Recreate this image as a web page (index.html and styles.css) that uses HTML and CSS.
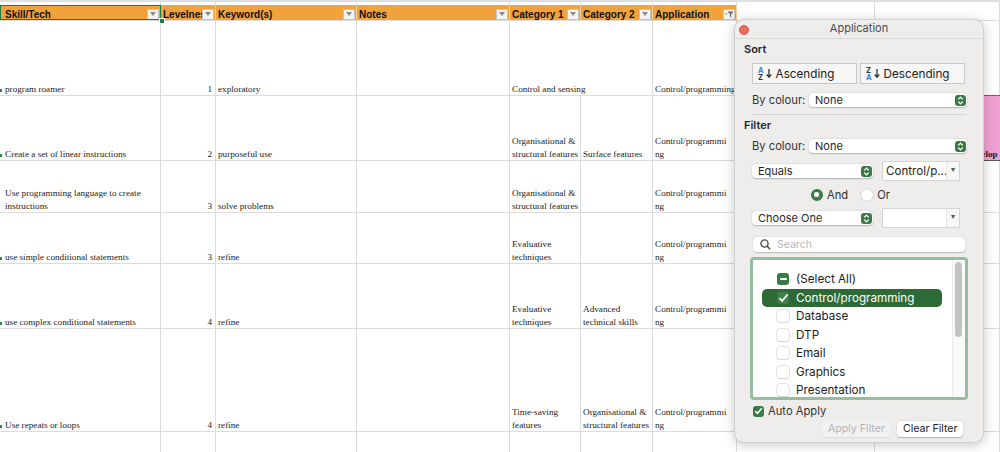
FILE: index.html
```html
<!DOCTYPE html>
<html>
<head>
    <link rel="stylesheet" href="styles.css">
</head>
<body>
    <div class="sheet">
        <div class="row top">
            <div></div><div></div><div></div><div></div><div></div><div></div><div></div><div></div><div></div>
        </div>
        <div class="row head">
            <div class="hc first"><span>Skill/Tech</span><b class="dd"></b></div>
            <div class="hc"><span>Levelness</span><b class="dd"></b></div>
            <div class="hc"><span>Keyword(s)</span><b class="dd"></b></div>
            <div class="hc"><span>Notes</span><b class="dd"></b></div>
            <div class="hc"><span>Category 1</span><b class="dd"></b></div>
            <div class="hc"><span>Category 2</span><b class="dd"></b></div>
            <div class="hc"><span>Application</span><b class="dd on">
                <svg width="10" height="9" viewBox="0 0 10 9"><path d="M1 3.5h2.4L2.2 5z" fill="#777"/><path d="M3.6 1.5h6l-2.4 2.8v3.2l-1.2-.8V4.3z" fill="#666"/></svg>
            </b></div>
            <div class="hc blank"></div>
            <div class="hc blank"></div>
        </div>
        <div class="row h75">
            <div class="c first mark">program roamer</div>
            <div class="c num">1</div>
            <div class="c">exploratory</div>
            <div class="c"></div>
            <div class="c span2">Control and sensing</div>
            <div class="c">Control/programming</div>
            <div class="c"></div>
            <div class="c"></div>
        </div>
        <div class="row h65">
            <div class="c first mark">Create a set of linear instructions</div>
            <div class="c num">2</div>
            <div class="c">purposeful use</div>
            <div class="c"></div>
            <div class="c">Organisational &amp;<br>structural features</div>
            <div class="c">Surface features</div>
            <div class="c">Control/programmi<br>ng</div>
            <div class="c"></div>
            <div class="c pink"><span>Develop</span></div>
        </div>
        <div class="row h52">
            <div class="c first">Use programming language to create<br>instructions</div>
            <div class="c num">3</div>
            <div class="c">solve problems</div>
            <div class="c"></div>
            <div class="c">Organisational &amp;<br>structural features</div>
            <div class="c"></div>
            <div class="c">Control/programmi<br>ng</div>
            <div class="c"></div>
            <div class="c"></div>
        </div>
        <div class="row h51">
            <div class="c first mark">use simple conditional statements</div>
            <div class="c num">3</div>
            <div class="c">refine</div>
            <div class="c"></div>
            <div class="c">Evaluative<br>techniques</div>
            <div class="c"></div>
            <div class="c">Control/programmi<br>ng</div>
            <div class="c"></div>
            <div class="c"></div>
        </div>
        <div class="row h65">
            <div class="c first mark">use complex conditional statements</div>
            <div class="c num">4</div>
            <div class="c">refine</div>
            <div class="c"></div>
            <div class="c">Evaluative<br>techniques</div>
            <div class="c">Advanced<br>technical skills</div>
            <div class="c">Control/programmi<br>ng</div>
            <div class="c"></div>
            <div class="c"></div>
        </div>
        <div class="row h103">
            <div class="c first mark">Use repeats or loops</div>
            <div class="c num">4</div>
            <div class="c">refine</div>
            <div class="c"></div>
            <div class="c">Time-saving<br>features</div>
            <div class="c">Organisational &amp;<br>structural features</div>
            <div class="c">Control/programmi<br>ng</div>
            <div class="c"></div>
            <div class="c"></div>
        </div>
        <div class="row h30">
            <div class="c"></div><div class="c"></div><div class="c"></div><div class="c"></div><div class="c"></div><div class="c"></div><div class="c"></div><div class="c"></div><div class="c"></div>
        </div>
    </div>
    <div class="sel-box"></div>
    <div class="sel-handle"></div>

    <div class="panel">
        <div class="titlebar"><span class="close"></span>Application</div>
        <div class="sect">Sort</div>
        <div class="sort-btns">
            <div class="sbtn">
                <span class="az"><i class="blue">A</i><i>Z</i></span>
                <svg width="6" height="11" viewBox="0 0 6 11"><path d="M3 1v8M.8 6.5 3 9.3l2.2-2.8" stroke="#333" stroke-width="1.3" fill="none"/></svg>
                Ascending
            </div>
            <div class="sbtn">
                <span class="az"><i>Z</i><i class="blue">A</i></span>
                <svg width="6" height="11" viewBox="0 0 6 11"><path d="M3 1v8M.8 6.5 3 9.3l2.2-2.8" stroke="#333" stroke-width="1.3" fill="none"/></svg>
                Descending
            </div>
        </div>
        <div class="frow r-sort">
            <span class="lbl">By colour:</span>
            <div class="select wide"><span>None</span><b class="step"><svg width="7" height="9" viewBox="0 0 7 9"><path d="M1.2 3.4 3.5 1.2l2.3 2.2M1.2 5.6l2.3 2.2 2.3-2.2" stroke="#fff" stroke-width="1.2" fill="none"/></svg></b></div>
        </div>
        <div class="sep"></div>
        <div class="sect">Filter</div>
        <div class="frow r-fcol">
            <span class="lbl">By colour:</span>
            <div class="select wide"><span>None</span><b class="step"><svg width="7" height="9" viewBox="0 0 7 9"><path d="M1.2 3.4 3.5 1.2l2.3 2.2M1.2 5.6l2.3 2.2 2.3-2.2" stroke="#fff" stroke-width="1.2" fill="none"/></svg></b></div>
        </div>
        <div class="cond r-eq">
            <div class="select mid"><span>Equals</span><b class="step"><svg width="7" height="9" viewBox="0 0 7 9"><path d="M1.2 3.4 3.5 1.2l2.3 2.2M1.2 5.6l2.3 2.2 2.3-2.2" stroke="#fff" stroke-width="1.2" fill="none"/></svg></b></div>
            <div class="combo"><span class="val">Control/p...</span><span class="drop">&#9662;</span></div>
        </div>
        <div class="radios">
            <span class="radio on"></span><span class="rlbl">And</span>
            <span class="radio"></span><span class="rlbl">Or</span>
        </div>
        <div class="cond r-ch">
            <div class="select mid"><span>Choose One</span><b class="step"><svg width="7" height="9" viewBox="0 0 7 9"><path d="M1.2 3.4 3.5 1.2l2.3 2.2M1.2 5.6l2.3 2.2 2.3-2.2" stroke="#fff" stroke-width="1.2" fill="none"/></svg></b></div>
            <div class="combo"><span class="val"></span><span class="drop">&#9662;</span></div>
        </div>
        <div class="search">
            <svg width="11" height="11" viewBox="0 0 11 11"><circle cx="4.5" cy="4.5" r="3.6" stroke="#444" stroke-width="1.3" fill="none"/><path d="M7.2 7.2 10.2 10.2" stroke="#444" stroke-width="1.4"/></svg>
            <span>Search</span>
        </div>
        <div class="list">
            <div class="items">
                <div class="item"><span class="cb mixed"></span>(Select All)</div>
                <div class="item hl"><span class="cb checked">
                    <svg width="11" height="10" viewBox="0 0 11 10"><path d="M1.5 5.2 4.2 8 9.5 1.5" stroke="#fff" stroke-width="1.8" fill="none"/></svg>
                </span>Control/programming</div>
                <div class="item"><span class="cb"></span>Database</div>
                <div class="item"><span class="cb"></span>DTP</div>
                <div class="item"><span class="cb"></span>Email</div>
                <div class="item"><span class="cb"></span>Graphics</div>
                <div class="item"><span class="cb"></span>Presentation</div>
            </div>
            <div class="scroll"><div class="thumb"></div></div>
        </div>
        <div class="auto">
            <span class="cb small"><svg width="9" height="8" viewBox="0 0 9 8"><path d="M1.2 4.2 3.4 6.4 7.8 1.2" stroke="#fff" stroke-width="1.6" fill="none"/></svg></span>
            Auto Apply
        </div>
        <div class="actions">
            <div class="abtn off">Apply Filter</div>
            <div class="abtn">Clear Filter</div>
        </div>
    </div>
</body>
</html>
```

FILE: styles.css
```css
body {
    margin: 0;
    width: 1000px;
    height: 452px;
    overflow: hidden;
    position: relative;
    background: #fff;
    font-family: "Liberation Serif", serif;
    color: #1c1c1c;
}

/* spreadsheet grid */
.row {
    display: grid;
    grid-template-columns: 161px 55px 141px 153px 71px 72px 84px 138px 1fr;
}
.row > div {
    box-sizing: border-box;
    box-shadow: inset -1px -1px 0 #dcdcdc;
    overflow: hidden;
}
.row.top {
    height: 5px;
    border-top: 2px solid #e0e0e0;
    box-sizing: border-box;
}
.row.top > div {
    box-shadow: inset -1px 0 0 #dcdcdc;
}
.row.head {
    height: 16px;
}
.hc {
    background: #f2a23b;
    box-shadow: inset -1px 0 0 #f7cf97, inset 0 -1px 0 #dcdcdc !important;
    display: flex;
    align-items: center;
    padding: 2px 1px 0 2px;
    font-family: "Liberation Sans", Arial, sans-serif;
    font-weight: bold;
    font-size: 10px;
    color: #111;
    white-space: nowrap;
}
.hc span {
    flex: 1;
    min-width: 0;
    overflow: hidden;
}
.hc.first {
    padding-left: 5px;
}
.hc.blank {
    background: #fff;
    box-shadow: inset -1px -1px 0 #dcdcdc !important;
}
.dd {
    flex: none;
    width: 12px;
    height: 11px;
    margin-right: 1px;
    box-sizing: border-box;
    background: #f3f3f3;
    border: 1px solid #c4c4c4;
    display: flex;
    align-items: center;
    justify-content: center;
}
.dd::after {
    content: "";
    border-left: 3.5px solid transparent;
    border-right: 3.5px solid transparent;
    border-top: 4px solid #8a8a8a;
}
.dd.on::after {
    display: none;
}

.h75 { height: 75px; }
.h65 { height: 65px; }
.h52 { height: 52px; }
.h51 { height: 51px; }
.h103 { height: 103px; }
.h30 { height: 30px; }

.c {
    position: relative;
    display: flex;
    flex-direction: column;
    justify-content: flex-end;
    padding: 0 2px 0 2px;
    font-size: 9.2px;
    line-height: 13px;
    white-space: nowrap;
}
.c.first {
    padding-left: 5px;
}
.c.num {
    align-items: flex-end;
    padding-right: 4px;
}
.c.span2 {
    grid-column: span 2;
}
.c.mark::before {
    content: "";
    position: absolute;
    left: 0;
    bottom: 4px;
    width: 2px;
    height: 3px;
    background: #2b8a47;
}
.c.pink {
    background: #f0a1d1;
    box-shadow: inset 0 1px 0 #666, inset 0 -1px 0 #555;
    margin-top: -1px;
    padding-left: 91px;
    font-weight: bold;
}

.sel-box {
    position: absolute;
    left: 0;
    top: 5px;
    width: 161px;
    height: 15px;
    box-sizing: border-box;
    border: 1px solid #1f7a3c;
}
.sel-handle {
    position: absolute;
    left: 159px;
    top: 18px;
    width: 4px;
    height: 4px;
    background: #1f7a3c;
    border: 1px solid #fff;
}

/* filter popup */
.panel {
    position: absolute;
    left: 734px;
    top: 19px;
    width: 250px;
    height: 424px;
    box-sizing: border-box;
    background: #eeedec;
    border: 1px solid #cfcfcf;
    border-radius: 10px;
    box-shadow: 0 2px 12px rgba(0, 0, 0, 0.22);
    font-family: Inter, "Noto Sans", sans-serif;
    font-size: 11.5px;
    color: #262626;
}
.titlebar {
    position: relative;
    height: 18px;
    border-bottom: 1px solid #dadada;
    text-align: center;
    line-height: 17px;
    font-size: 11px;
    color: #4b4b4b;
}
.close {
    position: absolute;
    left: 4px;
    top: 5px;
    width: 8px;
    height: 8px;
    border-radius: 50%;
    background: #ec6a5e;
    border: 0.5px solid #d65548;
}
.sect {
    margin: 3px 0 0 9px;
    height: 14px;
    line-height: 14px;
    font-weight: 600;
    font-size: 11px;
}
.sort-btns {
    display: flex;
    gap: 3px;
    margin: 7px 0 0 17px;
}
.sbtn {
    width: 105px;
    height: 21px;
    box-sizing: border-box;
    background: #f6f6f6;
    border: 1px solid #c8c8c8;
    display: flex;
    align-items: center;
    padding-left: 5px;
    gap: 2px;
    font-size: 11.7px;
    color: #222;
}
.az {
    display: flex;
    flex-direction: column;
    font-size: 7.5px;
    line-height: 7px;
    font-weight: 700;
}
.az i {
    font-style: normal;
    color: #333;
}
.az i.blue {
    color: #3d7ff0;
}
.sbtn svg {
    margin-right: 2px;
}
.frow {
    display: flex;
    align-items: center;
    margin-left: 17px;
    height: 14px;
}
.r-sort { margin-top: 9px; }
.r-fcol { margin-top: 7px; }
.lbl {
    width: 57px;
    font-size: 11.2px;
    color: #333;
}
.select {
    height: 14px;
    box-sizing: border-box;
    background: #fff;
    border-radius: 4px;
    box-shadow: 0 0.5px 1.5px rgba(0, 0, 0, 0.25);
    display: flex;
    align-items: center;
    justify-content: space-between;
    padding: 0 1.5px 0 6px;
    font-size: 11px;
}
.select.wide { width: 158px; }
.select.mid { width: 121px; }
.step {
    width: 11px;
    height: 11px;
    border-radius: 3px;
    background: #3a7b45;
    display: flex;
    align-items: center;
    justify-content: center;
}
.sep {
    margin: 7px 0 0 17px;
    width: 214px;
    height: 1px;
    background: #d6d6d6;
}
.cond {
    display: flex;
    align-items: center;
    margin-left: 17px;
    height: 20px;
    gap: 9px;
}
.r-eq { margin-top: 8px; }
.r-ch { margin-top: 6px; }
.combo {
    width: 78px;
    height: 20px;
    box-sizing: border-box;
    background: #fff;
    border: 1px solid #d4d4d4;
    display: flex;
    align-items: center;
}
.combo .val {
    flex: 1;
    padding-left: 3px;
    font-size: 11.6px;
    color: #222;
    white-space: nowrap;
    overflow: hidden;
}
.combo .drop {
    width: 13px;
    height: 100%;
    box-sizing: border-box;
    border-left: 1px solid #e6e6e6;
    background: #f7f7f7;
    color: #555;
    font-size: 8px;
    line-height: 14px;
    text-align: center;
}
.radios {
    display: flex;
    align-items: center;
    height: 14px;
    margin: 7px 0 0 76px;
}
.radio {
    width: 12px;
    height: 12px;
    box-sizing: border-box;
    border-radius: 50%;
    background: #fff;
    box-shadow: 0 0 0 0.5px #c4c4c4, 0 0.5px 1px rgba(0, 0, 0, 0.15);
}
.radio.on {
    background: #3a7b45;
    box-shadow: none;
    border: 3.5px solid #3a7b45;
    background-clip: padding-box;
    position: relative;
}
.radio.on::after {
    content: "";
    position: absolute;
    left: 0;
    top: 0;
    width: 5px;
    height: 5px;
    border-radius: 50%;
    background: #fff;
}
.rlbl {
    margin: 0 0 0 4px;
    font-size: 11.2px;
    color: #333;
}
.rlbl:nth-child(2) {
    margin-right: 13px;
}
.search {
    margin: 9px 0 0 18px;
    width: 212px;
    height: 15px;
    box-sizing: border-box;
    background: #fff;
    border-radius: 4px;
    box-shadow: 0 0.5px 1.5px rgba(0, 0, 0, 0.22);
    display: flex;
    align-items: center;
    gap: 6px;
    padding-left: 7px;
    font-size: 10.5px;
    color: #b8b8b8;
}
.list {
    margin: 5px 0 0 15px;
    width: 218px;
    height: 143px;
    box-sizing: border-box;
    background: #fff;
    border: 3px solid #94bf9e;
    border-radius: 4px;
    display: flex;
    overflow: hidden;
}
.items {
    flex: 1;
    padding: 10px 0 0 9px;
}
.item {
    height: 18.5px;
    width: 180px;
    box-sizing: border-box;
    display: flex;
    align-items: center;
    gap: 7px;
    padding-left: 15px;
    font-size: 11.7px;
    color: #222;
    white-space: nowrap;
}
.item.hl {
    background: #2e6a35;
    border-radius: 5px;
    color: #fff;
}
.cb {
    width: 12px;
    height: 12px;
    box-sizing: border-box;
    border-radius: 3px;
    background: #fff;
    box-shadow: 0 0 0 0.5px #c9c9c9, 0 0.5px 1px rgba(0, 0, 0, 0.12);
    display: flex;
    align-items: center;
    justify-content: center;
    flex: none;
}
.cb.mixed {
    background: #3a7b45;
    box-shadow: none;
}
.cb.mixed::after {
    content: "";
    width: 7px;
    height: 2px;
    background: #fff;
    border-radius: 1px;
}
.cb.checked {
    background: #3f8048;
    box-shadow: none;
}
.scroll {
    width: 13px;
    border-left: 1px solid #ececec;
    background: #fafafa;
    padding: 2px 0 0 2px;
    box-sizing: border-box;
}
.thumb {
    width: 7px;
    height: 75px;
    border-radius: 4px;
    background: #c3c3c3;
}
.auto {
    display: flex;
    align-items: center;
    gap: 4px;
    margin: 5px 0 0 18px;
    height: 12px;
    font-size: 11.2px;
    color: #333;
}
.cb.small {
    width: 11px;
    height: 11px;
    background: #3a7b45;
    box-shadow: none;
}
.actions {
    display: flex;
    gap: 6px;
    margin: 4px 0 0 87px;
}
.abtn {
    height: 16px;
    box-sizing: border-box;
    background: #fff;
    border-radius: 4px;
    box-shadow: 0 0.5px 1.5px rgba(0, 0, 0, 0.25);
    padding: 0 6px;
    line-height: 16px;
    font-size: 10.6px;
    color: #222;
    white-space: nowrap;
}
.abtn.off {
    background: #f1f1f1;
    color: #b4b4b4;
    box-shadow: 0 0.5px 1px rgba(0, 0, 0, 0.08);
}
```
